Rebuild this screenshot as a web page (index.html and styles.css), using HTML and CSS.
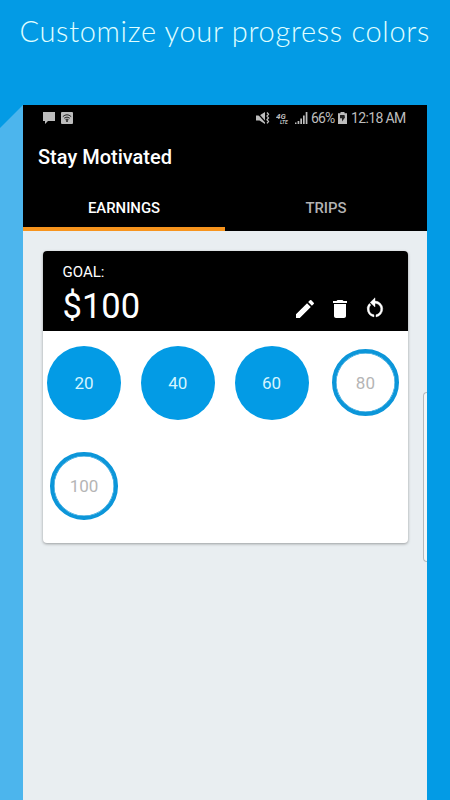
FILE: index.html
```html
<!DOCTYPE html>
<html lang="en">

<head>
  <meta charset="utf-8">
  <title>Stay Motivated</title>
  <link rel="stylesheet" href="styles.css">
</head>

<body>
  <h1 class="headline">Customize your progress colors</h1>

  <div class="stage">
    <div class="fold"></div>
    <div class="phone">
      <header class="app-header">
        <div class="status-bar">
          <svg class="icon-chat" width="12" height="12" viewBox="0 0 12 12"><path d="M0 0h12v9H5l-3 3V9H0z"/></svg>
          <svg class="icon-wifi" width="12" height="12" viewBox="0 0 12 12">
            <rect width="12" height="12" rx="1"/>
            <path class="wifi-line" d="M1.8 4.6Q6 .9 10.2 4.6M3.2 6.2Q6 3.9 8.8 6.2M4.5 7.7Q6 6.6 7.5 7.7"/>
            <circle class="wifi-dot" cx="6" cy="9" r="1"/>
          </svg>
          <div class="status-right">
            <svg class="icon-mute" width="14" height="12" viewBox="0 0 14 12">
              <path d="M0 3.500h3.500L9 0v12L3.500 8.500H0z"/>
              <path class="mute-slash" d="M.5 0l9 10"/>
              <path class="mute-wave" d="M11 .5l1.500 1.800L11 4.100l1.500 1.800L11 7.700l1.500 1.800L11 11.300"/>
            </svg>
            <svg class="icon-lte" width="13" height="12" viewBox="0 0 13 12">
              <text x="0" y="7" font-size="8">4G</text>
              <text x="4" y="12" font-size="5">LTE</text>
            </svg>
            <svg class="icon-signal" width="13" height="12" viewBox="0 0 13 12"><path d="M0 10.500h1.500V12H0zM2.600 9h1.700v3H2.600zM5.300 6.500H7V12H5.300zM8 3.500h1.700V12H8zM10.700 0h1.700v12h-1.700z"/></svg>
            <span class="battery-level">66%</span>
            <svg class="icon-battery" width="9" height="12" viewBox="0 0 9 12">
              <path d="M2.500 0h4v1.200H9V12H0V1.200h2.500z"/>
              <path class="battery-bolt" d="M2 3h4.500L7 5.500 4 9.500V6.300H2z"/>
            </svg>
            <span class="clock">12:18 AM</span>
          </div>
        </div>
        <h2 class="app-title">Stay Motivated</h2>
        <nav class="tabs">
          <div class="tab active">EARNINGS</div>
          <div class="tab">TRIPS</div>
        </nav>
      </header>

      <main class="content">
        <section class="card">
          <div class="card-header">
            <div class="goal">
              <div class="goal-label">GOAL:</div>
              <div class="goal-amount">$100</div>
            </div>
            <div class="actions">
              <svg width="24" height="24" viewBox="0 0 24 24"><path d="M3 17.250V21h3.750L17.810 9.940l-3.750-3.750L3 17.250zM20.710 7.040a1 1 0 0 0 0-1.410l-2.340-2.340a1 1 0 0 0-1.410 0l-1.830 1.830 3.750 3.750 1.830-1.830z"/></svg>
              <svg width="24" height="24" viewBox="0 0 24 24"><path d="M6 19c0 1.100.9 2 2 2h8c1.100 0 2-.9 2-2V7H6v12zM19 4h-3.500l-1-1h-5l-1 1H5v2h14V4z"/></svg>
              <svg class="icon-reset" width="24" height="24" viewBox="0 0 24 24"><path d="M12 4V.8L7.200 5.500 12 10V6.300a5.800 5.800 0 0 1 1 11.500v2.100A8 8 0 0 0 12 4zM6.200 12c0-1.600.6-3 1.600-4.100L6.340 6.500A8 8 0 0 0 11 19.900v-2.100A5.800 5.800 0 0 1 6.200 12z"/></svg>
            </div>
          </div>
          <div class="steps">
            <div class="step done">20</div>
            <div class="step done">40</div>
            <div class="step done">60</div>
            <div class="step">80</div>
            <div class="step">100</div>
          </div>
        </section>
        <div class="edge-handle"></div>
      </main>
    </div>
  </div>
</body>

</html>
```
FILE: styles.css
```css
* {
  box-sizing: border-box;
}

body {
  margin: 0;
  height: 800px;
  overflow: hidden;
  background-color: #039be5;
  font-family: Roboto, sans-serif;
  display: flex;
  flex-direction: column;
}

.headline {
  margin: 0;
  height: 105px;
  padding: 12px 0 0 19.5px;
  color: #e0ffff;
  font-family: Lato, sans-serif;
  font-size: 29px;
  font-weight: 300;
  line-height: 38px;
  letter-spacing: 0.68px;
  white-space: nowrap;
}

.stage {
  flex: 1;
  display: flex;
}

/* shaded side of the phone */
.fold {
  width: 23px;
  background-color: #4cb5ed;
  clip-path: polygon(100% 0, 100% 100%, 0 100%, 0 23px);
}

.phone {
  width: 404px;
  background-color: #e9eef1;
  display: flex;
  flex-direction: column;
}

.app-header {
  height: 126px;
  background-color: #000;
  color: #fff;
}

.status-bar {
  height: 26px;
  padding: 0 21px 0 20px;
  display: flex;
  align-items: center;
  color: #bdbdbd;
  fill: #bdbdbd;
  font-size: 14px;
}

.icon-wifi {
  margin-left: 6px;
}

.wifi-line {
  fill: none;
  stroke: #222;
  stroke-width: 1;
}

.wifi-dot,
.battery-bolt {
  fill: #222;
}

.status-right {
  margin-left: auto;
  display: flex;
  align-items: center;
}

.mute-slash {
  fill: none;
  stroke: #000;
  stroke-width: 1.2;
}

.mute-wave {
  fill: none;
  stroke: #bdbdbd;
  stroke-width: 1.3;
}

.icon-lte {
  margin-left: 6px;
  font-weight: 700;
  font-style: italic;
}

.icon-signal {
  margin-left: 6px;
}

.battery-level {
  margin-left: 3px;
  width: 23px;
  letter-spacing: -0.9px;
}

.icon-battery {
  margin-left: 4px;
}

.clock {
  margin-left: 4px;
  width: 55px;
  letter-spacing: -0.65px;
  white-space: nowrap;
}

.app-title {
  margin: 0;
  padding-left: 15px;
  height: 54px;
  font-size: 20px;
  font-weight: 500;
  line-height: 52px;
}

.tabs {
  height: 46px;
  display: flex;
}

.tab {
  flex: 1;
  border-bottom: 4px solid transparent;
  color: #b3b3b3;
  font-size: 14.9px;
  font-weight: 500;
  line-height: 47px;
  text-align: center;
}

.tab.active {
  color: #fff;
  border-bottom-color: #f7941d;
}

.content {
  flex: 1;
  position: relative;
  padding: 20px 19.5px;
}

.card {
  height: 292px;
  background-color: #fff;
  border-radius: 4px;
  box-shadow: 0 1px 3px rgba(0, 0, 0, 0.35);
  overflow: hidden;
}

.card-header {
  height: 80px;
  padding: 12px 21px 0 20px;
  background-color: #000;
  color: #fff;
  display: flex;
  justify-content: space-between;
}

.goal-label {
  font-size: 15px;
  line-height: 18px;
}

.goal-amount {
  font-size: 34.5px;
  line-height: 51px;
}

.actions {
  padding-top: 34px;
  display: flex;
  gap: 11px;
  fill: #fff;
}

.icon-reset {
  stroke: #fff;
  stroke-width: 0.4;
}

.steps {
  padding: 14.5px 4.5px;
  display: grid;
  grid-template-columns: repeat(4, 74px);
  grid-auto-rows: 74px;
  gap: 29.5px 19.8px;
  place-items: center;
}

.step {
  width: 67.5px;
  height: 67.5px;
  border: 4px solid #0c96d9;
  border-radius: 50%;
  box-shadow: inset 0 0 0 0.5px #0c96d9;
  color: #b5b5b5;
  font-size: 17px;
  display: flex;
  align-items: center;
  justify-content: center;
}

.step.done {
  width: 74px;
  height: 74px;
  border: none;
  box-shadow: none;
  background-color: #039be5;
  color: #d5f5ff;
}

/* slide-out panel handle on the screen edge */
.edge-handle {
  position: absolute;
  top: 161px;
  right: 0;
  width: 4px;
  height: 170px;
  background-color: #f3f6f7;
  border: 1px solid #b5babd;
  border-right: none;
  border-radius: 4px 0 0 4px;
}
```
